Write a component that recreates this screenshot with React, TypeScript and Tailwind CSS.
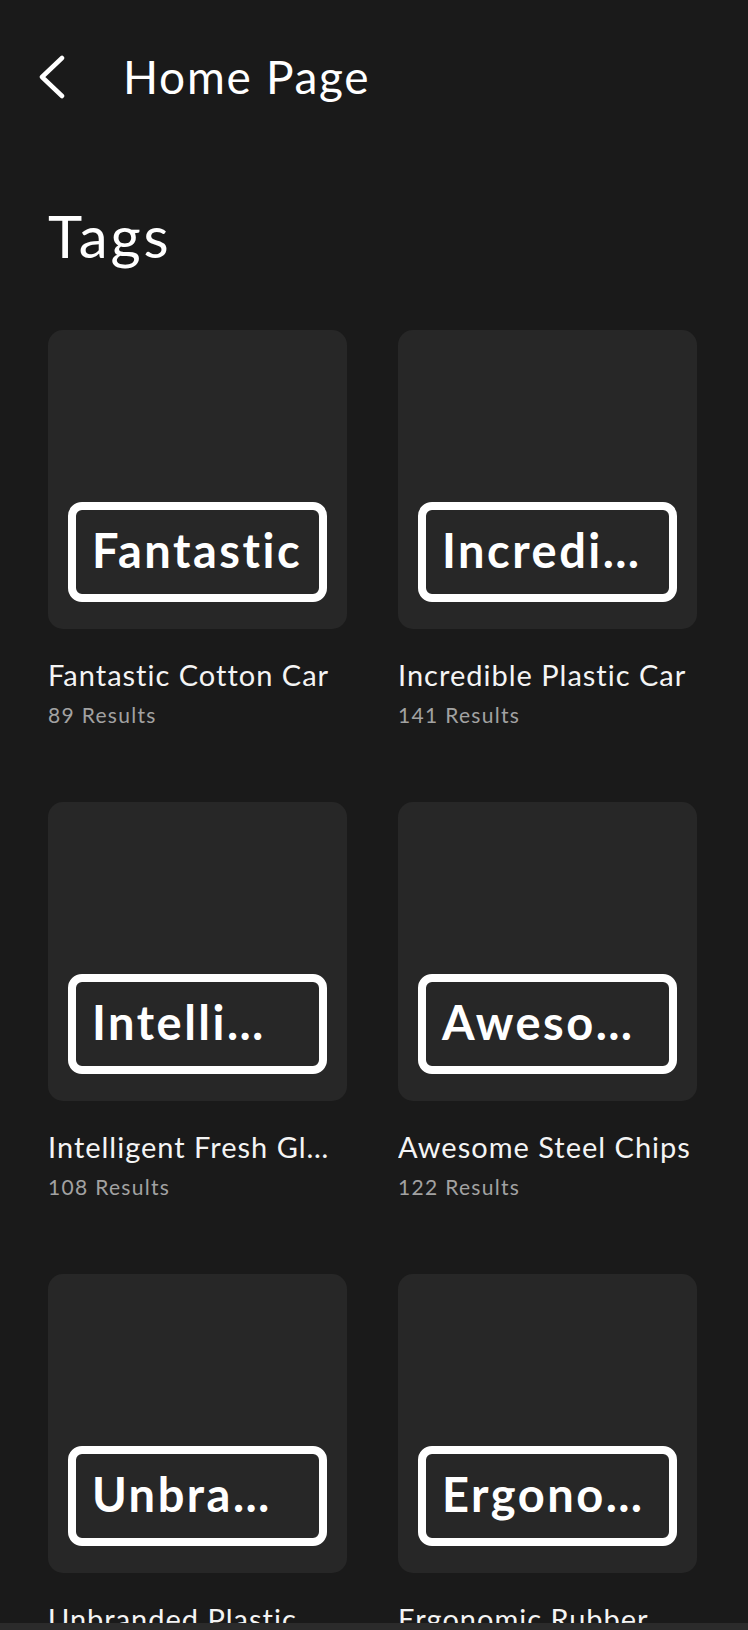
const tags = [
  { badge: 'Fantastic', title: 'Fantastic Cotton Car', count: 89 },
  { badge: 'Incredi…', title: 'Incredible Plastic Car', count: 141 },
  { badge: 'Intelli…', title: 'Intelligent Fresh Gl…', count: 108 },
  { badge: 'Aweso…', title: 'Awesome Steel Chips', count: 122 },
  { badge: 'Unbra…', title: 'Unbranded Plastic', count: 97 },
  { badge: 'Ergono…', title: 'Ergonomic Rubber', count: 76 },
]

function TagCard({ badge, title, count }: { badge: string; title: string; count: number }) {
  return (
    <div className="flex flex-col min-w-0">
      {/* tile with outlined label */}
      <div className="aspect-square rounded-[15px] bg-[#272727] flex flex-col justify-end px-[20px] pb-[27px]">
        <div className="h-[100px] rounded-[14px] border-[8px] border-white flex items-center px-[16px] pb-[4px] overflow-hidden">
          <span className="text-[47px] font-bold tracking-[2.5px] text-white whitespace-nowrap leading-none">{badge}</span>
        </div>
      </div>
      <p className="mt-[28px] text-[29px] leading-[36px] tracking-[1px] text-[#f4f4f4] truncate">{title}</p>
      <p className="mt-[9px] text-[21px] leading-[26px] tracking-[1.3px] text-[#a2a2a2]">{count} Results</p>
    </div>
  )
}

export default function App() {
  return (
    <div
      className="h-[1630px] overflow-hidden bg-[#1a1a1a] flex flex-col"
      style={{ fontFamily: 'Lato, "Open Sans", sans-serif' }}
    >
      <header className="h-[154px] shrink-0 flex items-center pl-[39px]">
        <svg width="26" height="44" viewBox="0 0 26 44" fill="none" stroke="white" strokeWidth="4.5" strokeLinecap="round" strokeLinejoin="round">
          <polyline points="23,3 3,22 23,41" />
        </svg>
        <span className="ml-[58px] text-[46px] tracking-[1.7px] text-white leading-none">Home Page</span>
      </header>

      <main className="flex-1 overflow-hidden px-[48px]">
        <h1 className="mt-[47px] mb-[59px] text-[58px] leading-[70px] tracking-[3px] text-white">Tags</h1>
        <div className="grid grid-cols-2 gap-x-[51px] gap-y-[74px] pr-[3px]">
          {tags.map((t) => (
            <TagCard key={t.title} {...t} />
          ))}
        </div>
      </main>

      <div className="h-[7px] shrink-0 bg-[#2b2b2b]" />
    </div>
  )
}
